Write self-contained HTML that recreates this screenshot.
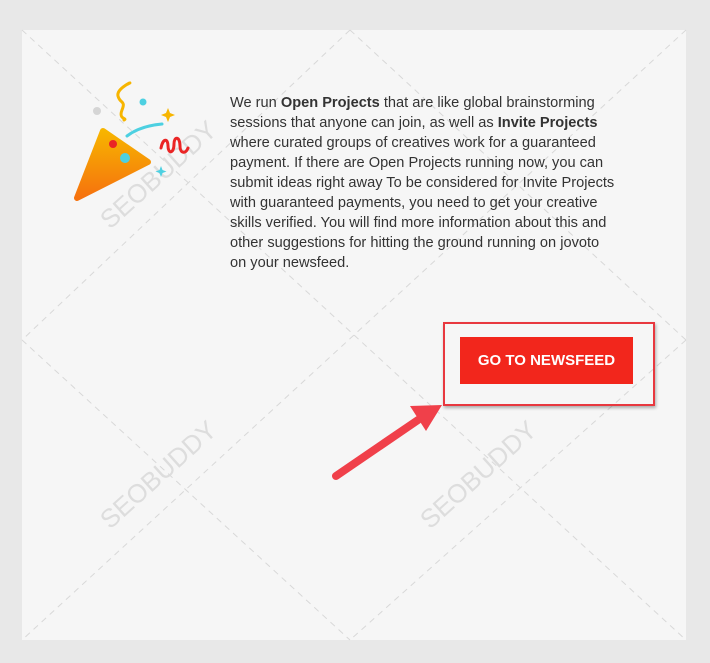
<!DOCTYPE html>
<html><head><style>
body{margin:0;width:710px;height:663px;background:#e8e8e8;position:relative;overflow:hidden;font-family:"Liberation Sans",sans-serif}
.panel{position:absolute;left:22px;top:30px;width:664px;height:610px;background:#f6f6f6}
.txt{position:absolute;left:230px;top:93px;font-size:14.6px;line-height:20px;color:#333;white-space:nowrap}
.box{position:absolute;left:443px;top:322px;width:208px;height:80px;border:2px solid #e8383f;box-shadow:1px 2px 3px rgba(0,0,0,.3)}
.btn{position:absolute;left:460px;top:337px;width:173px;height:47px;background:#f2261c;color:#fff;font-weight:bold;font-size:15px;text-align:center;line-height:47px}
</style></head><body>
<div class="panel"></div>
<svg style="position:absolute;left:0;top:0" width="710" height="663">
<g stroke="#d8d8d8" stroke-dasharray="6 5" stroke-width="1" fill="none">
<line x1="22" y1="30" x2="686" y2="640"/><line x1="686" y1="30" x2="22" y2="640"/>
<line x1="350" y1="30" x2="686" y2="340"/><line x1="350" y1="30" x2="22" y2="340"/>
<line x1="22" y1="340" x2="350" y2="640"/><line x1="686" y1="340" x2="350" y2="640"/>
</g>
<g font-family="Liberation Sans" fill="#ddd" font-size="26">
<text transform="translate(110,530) rotate(-42)">SEOBUDDY</text>
<text transform="translate(430,530) rotate(-42)">SEOBUDDY</text>
<text transform="translate(110,230) rotate(-42)">SEOBUDDY</text>
</g>
<defs><linearGradient id="g" x1="0" y1="0" x2="0" y2="1"><stop offset="0" stop-color="#f7b500"/><stop offset="1" stop-color="#f6720e"/></linearGradient></defs>
<path d="M103 131 L148 162 L77 198 Z" fill="url(#g)" stroke="url(#g)" stroke-width="6" stroke-linejoin="round"/>
<circle cx="113" cy="144" r="4" fill="#ea2525"/><circle cx="125" cy="158" r="5" fill="#4dd0e1"/>
<path d="M128 84 C136 80 116 88 118 96 C120 104 126 100 122 110 C118 120 128 118 124 120" stroke="#f7b500" stroke-width="3" fill="none" stroke-linecap="round"/>
<path d="M127 136 Q140 126 162 124" stroke="#4dd0e1" stroke-width="3" fill="none" stroke-linecap="round"/>
<path d="M161 148 C163 138 168 138 168 146 C168 154 174 154 174 144 C174 136 180 136 180 146 C180 154 186 154 188 148" stroke="#ea2525" stroke-width="3" fill="none" stroke-linecap="round"/>
<circle cx="97" cy="111" r="4" fill="#d5d5d5"/><circle cx="143" cy="102" r="3.5" fill="#4dd0e1"/>
<path d="M168 108 l2 5 5 2 -5 2 -2 5 -2 -5 -5 -2 5 -2z" fill="#f7b500"/>
<path d="M161 166 l1.5 4 4 1.5 -4 1.5 -1.5 4 -1.5 -4 -4 -1.5 4 -1.5z" fill="#4dd0e1"/>
<line x1="336" y1="476" x2="418" y2="420" stroke="#f0404a" stroke-width="8" stroke-linecap="round"/>
<path d="M442 405 L410 406 L426 431 Z" fill="#f0404a"/>
</svg>
<div class="txt">We run <b>Open Projects</b> that are like global brainstorming<br>sessions that anyone can join, as well as <b>Invite Projects</b><br>where curated groups of creatives work for a guaranteed<br>payment. If there are Open Projects running now, you can<br>submit ideas right away To be considered for Invite Projects<br>with guaranteed payments, you need to get your creative<br>skills verified. You will find more information about this and<br>other suggestions for hitting the ground running on jovoto<br>on your newsfeed.</div>
<div class="box"></div>
<div class="btn">GO TO NEWSFEED</div>
</body></html>
